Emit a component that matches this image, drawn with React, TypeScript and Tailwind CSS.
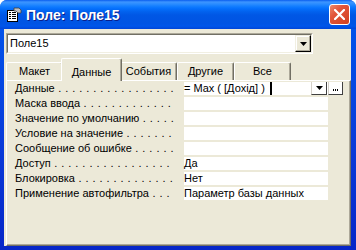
import React from "react";

function SheetIcon() {
  return (
    <svg width="16" height="16" viewBox="0 0 16 16" className="shrink-0">
      <rect x="1.5" y="3.5" width="10" height="11" fill="#fff" stroke="#000" />
      <rect x="3" y="5" width="2" height="1" fill="#000" />
      <rect x="6" y="5" width="4" height="1" fill="#000" />
      <rect x="3" y="7" width="2" height="1" fill="#000" />
      <rect x="6" y="7" width="4" height="1" fill="#000" />
      <rect x="3" y="9" width="2" height="1" fill="#000" />
      <rect x="6" y="9" width="4" height="1" fill="#000" />
      <rect x="3" y="11" width="2" height="1" fill="#000" />
      <rect x="6" y="11" width="4" height="1" fill="#000" />
      <path d="M8 1 L13 1 L15 3 L15 6 L12 6 L10 4 L8 4 Z" fill="#c0c0c0" stroke="#404040" strokeWidth="0.8" />
    </svg>
  );
}

function CloseButton() {
  return (
    <div className="w-[21px] h-[21px] rounded-[3px] border border-white bg-[linear-gradient(135deg,#ec8a6c_0%,#e2553a_35%,#d2401f_100%)] flex items-center justify-center">
      <svg width="11" height="11" viewBox="0 0 11 11">
        <path d="M1 1 L10 10 M10 1 L1 10" stroke="#fff" strokeWidth="2.2" strokeLinecap="square" />
      </svg>
    </div>
  );
}

function Triangle() {
  return (
    <svg width="7" height="4" viewBox="0 0 7 4">
      <path d="M0 0 H7 L3.5 4 Z" fill="#000" />
    </svg>
  );
}

const rows: { label: string; value: string }[] = [
  { label: "Данные", value: "" },
  { label: "Маска ввода", value: "" },
  { label: "Значение по умолчанию", value: "" },
  { label: "Условие на значение", value: "" },
  { label: "Сообщение об ошибке", value: "" },
  { label: "Доступ", value: "Да" },
  { label: "Блокировка", value: "Нет" },
  { label: "Применение автофильтра", value: "Параметр базы данных" },
];

const tabs = ["Макет", "Данные", "События", "Другие", "Все"];

const LABEL_W = 162;
const TRACK = 0.45;

function measure(text: string): number {
  if (typeof document === "undefined") return text.length * 6;
  const c = document.createElement("canvas").getContext("2d");
  if (!c) return text.length * 6;
  c.font = "11px 'Liberation Sans', Arial, sans-serif";
  return c.measureText(text).width;
}

function dotsFor(label: string): string {
  const lw = measure(label);
  const unit = measure(" .") + TRACK * 2;
  const avail = LABEL_W - lw - 2;
  const n = Math.max(0, Math.floor(avail / unit));
  return " .".repeat(n);
}

export default function App() {
  return (
    <div className="w-[356px] h-[250px] flex flex-col rounded-t-[7px] overflow-hidden bg-[linear-gradient(to_bottom,#0058ee,#0a3ad8_60%,#0626c8)] font-['Liberation_Sans',Arial,sans-serif] text-[11px] leading-none text-black">
      {/* Title bar */}
      <div className="h-[29px] shrink-0 flex items-center pl-[6px] pr-[6px] bg-[linear-gradient(to_bottom,#0a5eee_0%,#3d95ff_7%,#2a8cff_14%,#127dff_22%,#046ffc_30%,#0262ee_40%,#0057e5_52%,#0054e3_80%,#0056ea_90%,#0046d8_100%)]">
        <SheetIcon />
        <span className="ml-[4px] text-white font-bold text-[14px] [text-shadow:1px_1px_#0a1e8c]">
          Поле: Поле15
        </span>
        <div className="ml-auto">
          <CloseButton />
        </div>
      </div>

      {/* Client area */}
      <div className="flex-1 ml-[4px] mr-[5px] mb-[4px] bg-[#ece9d8] flex flex-col pt-[4px] pl-[2px]">
        {/* Combo */}
        <div className="w-[307px] h-[21px] flex border border-t-[#aca899] border-l-[#aca899] border-r-white border-b-white">
          <div className="flex-1 flex border border-t-[#716f64] border-l-[#716f64] border-r-[#f1efe2] border-b-[#f1efe2] bg-white">
            <div className="flex-1 flex items-center pl-[2px]">Поле15</div>
            <div className="w-[16px] flex items-center justify-center bg-[#ece9d8] border border-t-[#f1efe2] border-l-[#f1efe2] border-r-[#000] border-b-[#000] shadow-[inset_-1px_-1px_#aca899,inset_1px_1px_#fff]">
              <Triangle />
            </div>
          </div>
        </div>

        {/* Tabs */}
        <div className="mt-[4px] h-[23px] flex items-end relative z-10">
          {tabs.map((t, i) =>
            i === 1 ? (
              <div
                key={t}
                className="w-[61px] -mx-[2px] h-[23px] flex items-start justify-center pt-[8px] bg-[#ece9d8] border-t border-l border-white border-r border-r-[#716f64] shadow-[inset_-1px_0_#aca899] rounded-t-[2px] relative z-10"
              >
                {t}
              </div>
            ) : (
              <div
                key={t}
                className="w-[57px] h-[18px] mb-[1px] flex items-center justify-center bg-[#ece9d8] border-t border-l border-white border-r border-r-[#716f64] shadow-[inset_-1px_0_#aca899] rounded-t-[2px]"
              >
                {t}
              </div>
            )
          )}
        </div>

        {/* Panel */}
        <div className="-mt-[1px] flex-1 border-t border-l border-white border-r border-b border-r-[#716f64] border-b-[#716f64] shadow-[inset_-1px_-1px_#aca899] pt-[1px] pl-[8px]">
          {rows.map((r, i) => (
            <div key={r.label} className="h-[15px] flex items-start">
              <div className="w-[162px] h-[13px] flex items-center whitespace-pre">
                <span>{r.label}</span>
                <span className="tracking-[0.45px]">{dotsFor(r.label)}</span>
              </div>
              {i === 0 ? (
                <div className="ml-[7px] w-[159px] h-[13px] bg-white flex items-center">
                  <span className="whitespace-nowrap">= Max ( [Дохід] )</span>
                  <span className="ml-[5px] w-[2px] h-[13px] bg-black" />
                  <div className="ml-auto flex h-[13px]">
                    <div className="w-[16px] h-[13px] flex items-center justify-center bg-white border-r border-b border-[#404040] border-l border-l-[#d4d0c8]">
                      <Triangle />
                    </div>
                    <div className="ml-[1px] w-[15px] h-[13px] flex items-end justify-center pb-[3px] bg-white border-r border-b border-[#404040] border-l border-l-[#d4d0c8]">
                      <span className="w-[1px] h-[2px] bg-black" />
                      <span className="w-[1px] h-[2px] bg-black ml-[1px]" />
                      <span className="w-[1px] h-[2px] bg-black ml-[1px]" />
                    </div>
                  </div>
                </div>
              ) : (
                <div className="ml-[7px] w-[144px] h-[13px] bg-white flex items-center whitespace-nowrap">
                  {r.value}
                </div>
              )}
            </div>
          ))}
        </div>
      </div>
    </div>
  );
}
